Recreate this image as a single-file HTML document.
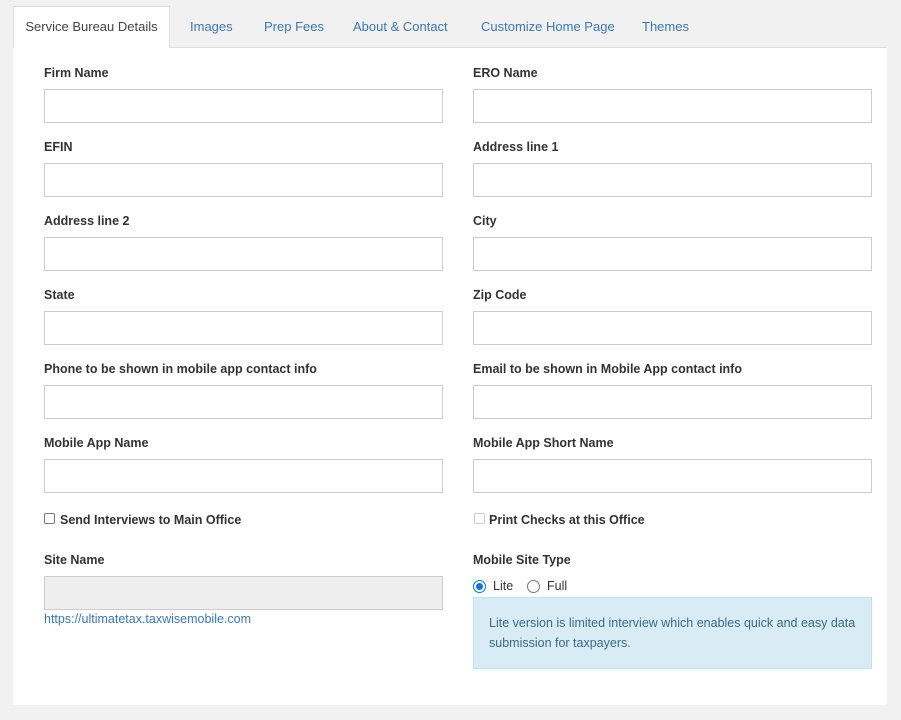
<!DOCTYPE html><html><head><style>
body{margin:0;width:901px;height:720px;background:#f1f1f1;font-family:"Liberation Sans",sans-serif;position:relative;overflow:hidden}
.a{position:absolute}
.tab{position:absolute;top:19px;font-size:13px;color:#3a78b5}
.panel{position:absolute;left:13px;top:47px;width:874px;height:658px;background:#fff}
.acttab{position:absolute;left:13px;top:6px;width:157px;height:42px;background:#fff;border:1px solid #ddd;border-bottom:none;box-sizing:border-box;font-size:13px;color:#444;text-align:center;line-height:40px}
.tabline{position:absolute;left:170px;top:47px;width:717px;height:1px;background:#ddd}
.lbl{position:absolute;font-size:12.5px;font-weight:bold;color:#333}
.in{position:absolute;width:399px;height:34px;border:1px solid #ccc;box-sizing:border-box;background:#fff}
.cb{position:absolute;width:11px;height:11px;border:1px solid #777;border-radius:2px;box-sizing:border-box;background:#fff}
</style></head><body>
<div class="panel"></div>
<div class="tabline"></div>
<div class="acttab">Service Bureau Details</div>
<div class="tab" style="left:190px">Images</div>
<div class="tab" style="left:264px">Prep Fees</div>
<div class="tab" style="left:353px">About &amp; Contact</div>
<div class="tab" style="left:481px">Customize Home Page</div>
<div class="tab" style="left:642px">Themes</div>

<div class="lbl" style="left:44px;top:66px">Firm Name</div><div class="in" style="left:44px;top:89px"></div>
<div class="lbl" style="left:473px;top:66px">ERO Name</div><div class="in" style="left:473px;top:89px"></div>
<div class="lbl" style="left:44px;top:140px">EFIN</div><div class="in" style="left:44px;top:163px"></div>
<div class="lbl" style="left:473px;top:140px">Address line 1</div><div class="in" style="left:473px;top:163px"></div>
<div class="lbl" style="left:44px;top:214px">Address line 2</div><div class="in" style="left:44px;top:237px"></div>
<div class="lbl" style="left:473px;top:214px">City</div><div class="in" style="left:473px;top:237px"></div>
<div class="lbl" style="left:44px;top:288px">State</div><div class="in" style="left:44px;top:311px"></div>
<div class="lbl" style="left:473px;top:288px">Zip Code</div><div class="in" style="left:473px;top:311px"></div>
<div class="lbl" style="left:44px;top:362px">Phone to be shown in mobile app contact info</div><div class="in" style="left:44px;top:385px"></div>
<div class="lbl" style="left:473px;top:362px">Email to be shown in Mobile App contact info</div><div class="in" style="left:473px;top:385px"></div>
<div class="lbl" style="left:44px;top:436px">Mobile App Name</div><div class="in" style="left:44px;top:459px"></div>
<div class="lbl" style="left:473px;top:436px">Mobile App Short Name</div><div class="in" style="left:473px;top:459px"></div>

<div class="cb" style="left:44px;top:513px"></div><div class="lbl" style="left:60px;top:513px">Send Interviews to Main Office</div>
<div class="cb" style="left:474px;top:513px;border-color:#ccc"></div><div class="lbl" style="left:489px;top:513px">Print Checks at this Office</div>

<div class="lbl" style="left:44px;top:553px">Site Name</div>
<div class="in" style="left:44px;top:576px;background:#eee"></div>
<div class="a" style="left:44px;top:612px;font-size:12.5px;color:#3a78b5">https://ultimatetax.taxwisemobile.com</div>

<div class="lbl" style="left:473px;top:553px">Mobile Site Type</div>
<div class="a" style="left:473px;top:580px;width:13px;height:13px;border-radius:50%;border:1px solid #0a75e0;box-sizing:border-box"><div style="margin:2px;width:7px;height:7px;border-radius:50%;background:#0a75e0"></div></div>
<div class="a" style="left:493px;top:579px;font-size:12.5px;color:#333">Lite</div>
<div class="a" style="left:527px;top:580px;width:13px;height:13px;border-radius:50%;border:1px solid #777;box-sizing:border-box"></div>
<div class="a" style="left:547px;top:579px;font-size:12.5px;color:#333">Full</div>
<div class="a" style="left:473px;top:597px;width:399px;height:72px;background:#d9ecf5;border:1px solid #bce3ee;box-sizing:border-box;padding:15px 15px;font-size:12.5px;line-height:20px;color:#3a6a8a">Lite version is limited interview which enables quick and easy data submission for taxpayers.</div>
</body></html>
